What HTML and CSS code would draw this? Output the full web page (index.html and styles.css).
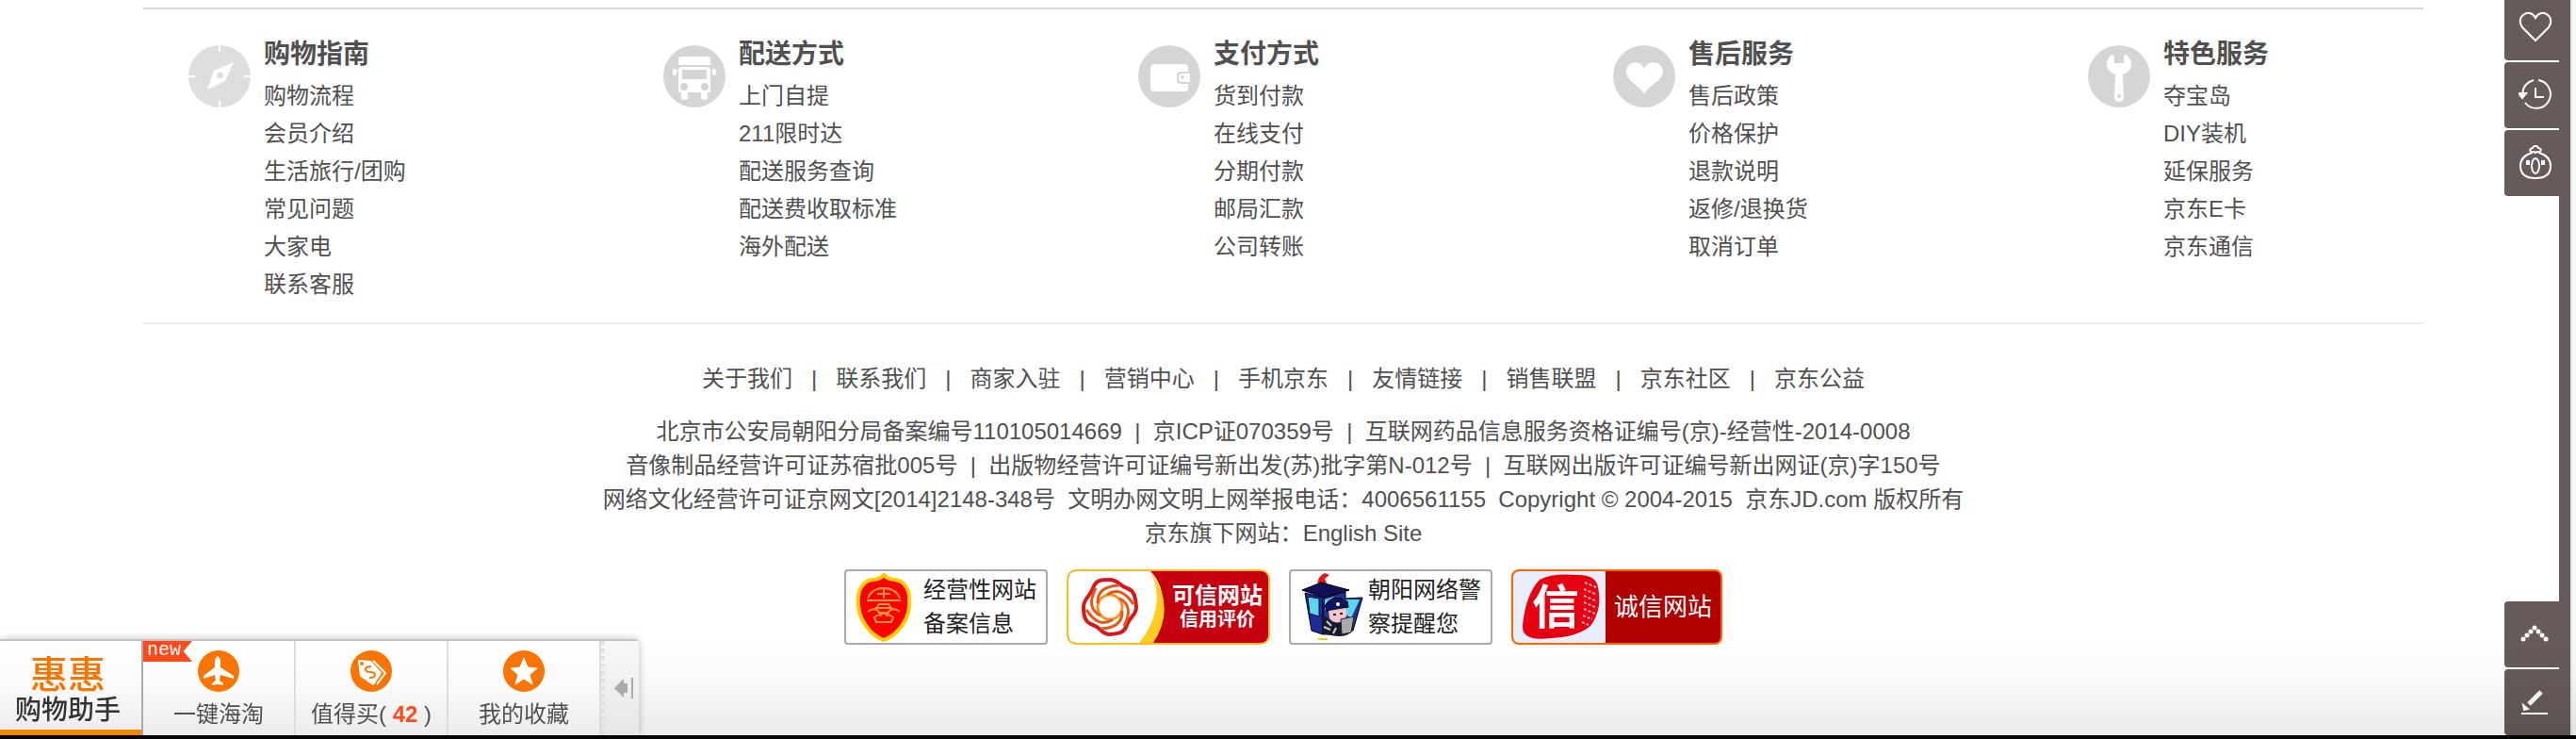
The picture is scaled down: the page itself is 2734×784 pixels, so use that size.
FILE: index.html
```html
<!DOCTYPE html>
<html lang="zh-CN">
<head>
<meta charset="utf-8">
<title>京东</title>
<link rel="stylesheet" href="styles.css">
</head>
<body>
<footer class="footer">
  <div class="services">
    <section class="service">
      <svg class="service-icon" viewBox="0 0 66 66" aria-hidden="true"><circle cx="33" cy="33" r="33" fill="#dedede"/><path d="M33 0v7M33 59v7M0 33h7M59 33h7" stroke="#fff" stroke-width="2"/><path d="M48 18L39 38 20 47 27 27z" fill="#fff"/><circle cx="33.500" cy="32" r="3.500" fill="#dedede"/></svg>
      <div>
        <h2 class="service-title">购物指南</h2>
        <ul class="service-list"><li><a href="#">购物流程</a></li><li><a href="#">会员介绍</a></li><li><a href="#">生活旅行/团购</a></li><li><a href="#">常见问题</a></li><li><a href="#">大家电</a></li><li><a href="#">联系客服</a></li></ul>
      </div>
    </section>
    <section class="service">
      <svg class="service-icon" viewBox="0 0 66 66" aria-hidden="true"><circle cx="33" cy="33" r="33" fill="#d5d5d5"/><g fill="#fff"><path d="M19 12h28q3 0 3 3v6H16v-6q0-3 3-3z"/><path d="M20 23h26q4 0 4 4v23H16V27q0-4 4-4z"/><rect x="10" y="25" width="4" height="7" rx="2"/><rect x="52" y="25" width="4" height="7" rx="2"/><rect x="19" y="48" width="7" height="10" rx="3"/><rect x="40" y="48" width="7" height="10" rx="3"/></g><path d="M13 27h3M50 27h3" stroke="#fff" stroke-width="1"/><rect x="20" y="26" width="26" height="10" fill="#d5d5d5"/><circle cx="22" cy="44" r="4" fill="#d5d5d5"/><circle cx="44" cy="44" r="4" fill="#d5d5d5"/></svg>
      <div>
        <h2 class="service-title">配送方式</h2>
        <ul class="service-list"><li><a href="#">上门自提</a></li><li><a href="#">211限时达</a></li><li><a href="#">配送服务查询</a></li><li><a href="#">配送费收取标准</a></li><li><a href="#">海外配送</a></li></ul>
      </div>
    </section>
    <section class="service">
      <svg class="service-icon" viewBox="0 0 66 66" aria-hidden="true"><circle cx="33" cy="33" r="33" fill="#d5d5d5"/><rect x="13" y="20" width="40" height="29" rx="4" fill="#fff"/><path d="M55 28h-9q-5 0-5 4v5q0 4 5 4h9z" fill="#d5d5d5"/><path d="M55 30h-8q-4 0-4 3v3q0 3 4 3h8z" fill="#fff"/><circle cx="47" cy="34" r="2" fill="#d5d5d5"/></svg>
      <div>
        <h2 class="service-title">支付方式</h2>
        <ul class="service-list"><li><a href="#">货到付款</a></li><li><a href="#">在线支付</a></li><li><a href="#">分期付款</a></li><li><a href="#">邮局汇款</a></li><li><a href="#">公司转账</a></li></ul>
      </div>
    </section>
    <section class="service">
      <svg class="service-icon" viewBox="0 0 66 66" aria-hidden="true"><circle cx="33" cy="33" r="33" fill="#d5d5d5"/><path d="M33 25C35 16 52 15 53 28 53 38 38 42 33 52 28 42 14 38 14 28 15 15 31 16 33 25z" fill="#fff"/></svg>
      <div>
        <h2 class="service-title">售后服务</h2>
        <ul class="service-list"><li><a href="#">售后政策</a></li><li><a href="#">价格保护</a></li><li><a href="#">退款说明</a></li><li><a href="#">返修/退换货</a></li><li><a href="#">取消订单</a></li></ul>
      </div>
    </section>
    <section class="service">
      <svg class="service-icon" viewBox="0 0 66 66" aria-hidden="true"><circle cx="33" cy="33" r="33" fill="#d5d5d5"/><path d="M25 10q3 0 3 3v6h10v-6q0-3 3-3 5 4 5 11 0 7-9 10l1 24q0 5-5 5t-5-5l1-24q-9-3-9-10 0-7 5-11z" fill="#fff"/><circle cx="33" cy="54" r="2" fill="#d5d5d5"/></svg>
      <div>
        <h2 class="service-title">特色服务</h2>
        <ul class="service-list"><li><a href="#">夺宝岛</a></li><li><a href="#">DIY装机</a></li><li><a href="#">延保服务</a></li><li><a href="#">京东E卡</a></li><li><a href="#">京东通信</a></li></ul>
      </div>
    </section>
  </div>

  <nav class="about">
    <a href="#">关于我们</a><span>|</span><a href="#">联系我们</a><span>|</span><a href="#">商家入驻</a><span>|</span><a href="#">营销中心</a><span>|</span><a href="#">手机京东</a><span>|</span><a href="#">友情链接</a><span>|</span><a href="#">销售联盟</a><span>|</span><a href="#">京东社区</a><span>|</span><a href="#">京东公益</a>
  </nav>

  <div class="legal">
    <p>北京市公安局朝阳分局备案编号110105014669&nbsp; |&nbsp; 京ICP证070359号&nbsp; |&nbsp; <a href="#">互联网药品信息服务资格证编号(京)-经营性-2014-0008</a></p>
    <p><a href="#">音像制品经营许可证苏宿批005号</a>&nbsp; |&nbsp; 出版物经营许可证编号新出发(苏)批字第N-012号&nbsp; |&nbsp; 互联网出版许可证编号新出网证(京)字150号</p>
    <p><a href="#">网络文化经营许可证京网文[2014]2148-348号</a>&nbsp; 文明办网文明上网举报电话：4006561155&nbsp; Copyright © 2004-2015&nbsp; 京东JD.com 版权所有</p>
    <p>京东旗下网站：<a href="#">English Site</a></p>
  </div>

  <div class="badges">
    <a class="badge badge-plain" href="#">
      <svg class="badge-shield" viewBox="0 0 60 74" aria-hidden="true"><path d="M30 3q5 5 12 5 8 1 12 8 4 6 3 20-1 15-13 27-6 6-14 9-8-3-14-9Q4 50 3 36 2 21 6 16q4-7 12-8 7 0 12-5z" fill="#f00" stroke="#fc0" stroke-width="4"/><path d="M13 28Q17 17 30 17t17 11M12 30h36M30 16v12M24 17h12M23 23h14M25 34h10l3 4H22zM13 42q6-5 11-1l3 6M47 42q-6-5-11-1l-3 6M20 48q10-8 20 0l-2 5H22zM24 43h12" fill="none" stroke="#f93" stroke-width="2"/></svg>
      <span>经营性网站<br>备案信息</span>
    </a>
    <a class="badge badge-trust" href="#">
      <svg class="badge-swoosh" viewBox="0 0 104 76" aria-hidden="true"><path d="M0 0h87q14 14 14 40 0 20-12 36H0z" fill="#fff"/><path d="M87 0q28 38 3 76H75q30-38 12-76z" fill="#fc2"/><g transform="translate(44 38)"><path d="M0-29C9-29 9-23 18-20S27-9 28 0c0 9-7 10-10 19S9 28 0 29c-9 0-9-7-18-10S-28 9-28 0c0-9 7-11 10-20S-9-29 0-29z" fill="#fff" stroke="#d8161c" stroke-width="4"/><circle r="13" fill="none" stroke="#f7941d" stroke-width="3"/><g fill="none" stroke="#e4571b" stroke-width="3"><path d="M-13-4Q-14-22 10-23"/><path d="M-13-4Q-14-22 10-23" transform="rotate(60)"/><path d="M-13-4Q-14-22 10-23" transform="rotate(120)"/><path d="M-13-4Q-14-22 10-23" transform="rotate(180)"/><path d="M-13-4Q-14-22 10-23" transform="rotate(240)"/><path d="M-13-4Q-14-22 10-23" transform="rotate(300)"/></g></g></svg>
      <span class="trust-text"><b>可信网站</b><small>信用评价</small></span>
    </a>
    <a class="badge badge-plain badge-police" href="#">
      <svg class="badge-cop" viewBox="0 0 70 74" aria-hidden="true"><path d="M19 14q-2-9 7-13l5 2-5 4 3 7z" fill="#e11"/><path d="M2 19L22 11 52 19 25 27z" fill="#115" stroke="#000"/><path d="M5 22L24 27V66L12 62z" fill="#1d2a9c" stroke="#000"/><path d="M8 26L20 28V47L10 44z" fill="#5cd6ee" stroke="#013"/><path d="M25 27L48 21V28L66 27 56 62 24 66z" fill="#24309a" stroke="#000"/><path d="M46 29l17 0-9 20-8-6zM26 29l10-3-6 12-4 2z" fill="#5cd6ee"/><path d="M26 36q8-15 24-5l1 6-22 5z" fill="#0a1760" stroke="#000"/><path d="M30 41l18-3q4 9-3 14-9 4-14-3z" fill="#f6c5cb"/><path d="M22 45l8 4q6 8 18 3l8 8q-4 9-16 8l-16-2z" fill="#171c2b"/><path d="M43 50l14-3-3 17-10 2z" fill="#aaa" stroke="#222"/><path d="M28 52l5 5M25 58l7 3M35 65l3-6" stroke="#ccc" stroke-width="2"/><circle cx="40" cy="34" r="2" fill="#fff"/><path d="M35 45h3M42 44h3" stroke="#222" stroke-width="2"/><path d="M19 71h10" stroke="#fc0" stroke-width="2"/></svg>
      <span>朝阳网络警<br>察提醒您</span>
    </a>
    <a class="badge badge-honest" href="#">
      <svg class="badge-seal" viewBox="0 0 98 76" aria-hidden="true"><path d="M0 0h98v76H0z" fill="#e8eefa"/><path d="M28 9Q42 2 66 4q22-1 24 13 5 24-8 41Q68 70 40 71 9 75 10 58 13 25 28 9z" fill="#e60012"/><path d="M76 12l12 5M75 19l14 6M75 26l14 6M75 33l14 6M75 40l12 5M74 47l10 4M73 54l7 3" stroke="#f6b9c0" stroke-width="2" stroke-dasharray="3 2"/><text x="20" y="56" class="seal-char">信</text></svg>
      <span class="honest-text">诚信网站</span>
    </a>
  </div>
</footer>

<aside class="sidebar">
  <div class="tabs tabs-top">
    <button class="tab" type="button" aria-label="我的关注"><svg class="tab-icon" viewBox="0 0 36 36"><path d="M18 33L4 19Q0 13 3 8 7 3 12 4q4 1 6 5 2-4 6-5 5-1 9 4 3 5-1 11z"/></svg></button>
    <button class="tab" type="button" aria-label="我的足迹"><svg class="tab-icon" viewBox="0 0 36 36"><path d="M16 3Q5 6 4 18M21 3a15 15 0 1 1-14 24M18 11v10h9"/><path d="M0 17h8l-4 5z" fill="#fff"/></svg></button>
    <button class="tab" type="button" aria-label="我的钱包"><svg class="tab-icon" viewBox="0 0 36 36"><path d="M14 8Q2 12 2 22q0 13 16 13t16-13Q34 12 22 8M14 8q-4-4 1-5 3-5 6 0 5 1 1 5-2-2-4 0-2-2-4 0z"/><ellipse cx="18" cy="22" rx="4" ry="8"/><path d="M10 16v5M26 16v5" stroke-width="4"/></svg></button>
  </div>
  <div class="tabs">
    <button class="tab" type="button" aria-label="返回顶部"><svg class="tab-icon" viewBox="0 0 36 36"><g fill="#fff" stroke="none"><circle cx="5" cy="24" r="2.500"/><circle cx="9" cy="20" r="2.500"/><circle cx="13" cy="16" r="2.500"/><circle cx="17" cy="12" r="2.500"/><circle cx="21" cy="16" r="2.500"/><circle cx="25" cy="20" r="2.500"/><circle cx="29" cy="24" r="2.500"/></g></svg></button>
    <button class="tab" type="button" aria-label="意见反馈"><svg class="tab-icon" viewBox="0 0 36 36"><path d="M3 31h28"/><path d="M24 8L11 21" stroke-width="5"/><path d="M5 22l5 4-4 1z" fill="#fff"/></svg></button>
  </div>
</aside>

<div class="shade"></div>

<div class="helper">
  <a class="helper-brand" href="#"><span class="brand-mark">惠惠</span><span class="brand-name">购物助手</span></a>
  <a class="helper-item" href="#">
    <span class="new-flag">new</span>
    <svg class="helper-icon" viewBox="0 0 44 44" aria-hidden="true"><circle cx="22" cy="22" r="22" fill="#f97400"/><path d="M21 6q3 2 3 6v6l14 9v3l-14-4-1 6 4 3v2l-6-1-6 1v-2l4-3-1-6-12 4v-3l12-9v-6q0-4 3-6z" fill="#fff"/></svg>
    <span>一键海淘</span>
  </a>
  <a class="helper-item" href="#">
    <svg class="helper-icon" viewBox="0 0 44 44" aria-hidden="true"><circle cx="22" cy="22" r="22" fill="#f97400"/><path d="M9 11l12 1 11 12-8 12-13-9z" fill="#fff" stroke="#fff" stroke-width="2" stroke-linejoin="round"/><path d="M24 11l13 13-9 12" fill="none" stroke="#fff" stroke-width="2"/><circle cx="12" cy="14" r="2" fill="#f97400"/><path d="M22 17q-6 0-6 3t5 3 5 3-6 3" fill="none" stroke="#f97400" stroke-width="2"/></svg>
    <span>值得买( <b class="count">42</b> )</span>
  </a>
  <a class="helper-item" href="#">
    <svg class="helper-icon" viewBox="0 0 44 44" aria-hidden="true"><circle cx="22" cy="22" r="22" fill="#f97400"/><path d="M22 8l4 10 10 1-8 7 3 10-9-6-9 6 3-10-8-7 10-1z" fill="#fff" stroke="#fff" stroke-linejoin="round"/></svg>
    <span>我的收藏</span>
  </a>
  <button class="helper-fold" type="button" aria-label="收起"><svg class="fold-icon" viewBox="0 0 20 22"><path d="M0 11L10 1v5h4v10h-4v5z" fill="#aaa"/><path d="M19 0v22" stroke="#aaa" stroke-width="2"/></svg></button>
</div>
<div class="baseline"></div>
</body>
</html>
```
FILE: styles.css
```css
* { box-sizing: border-box; }

body {
  margin: 0;
  min-height: 100vh;
  padding: 8px 10px 0 0;
  background: #fff;
  color: #505050;
  font-family: "Liberation Sans", "Noto Sans CJK SC", sans-serif;
  font-size: 24px;
  line-height: 36px;
}

a { color: inherit; text-decoration: none; }
p { margin: 0; }
button { border: 0; padding: 0; cursor: pointer; }

.footer {
  max-width: 2420px;
  margin: 0 auto;
  text-align: center;
}

.services {
  display: grid;
  grid-template-columns: repeat(4, 1fr) 356px;
  padding: 28px 0 20px 48px;
  border-top: 2px solid #d4d4d4;
  border-bottom: 2px solid #ededed;
  text-align: left;
}

.service { display: flex; gap: 14px; }
.service-icon { flex: none; width: 66px; height: 66px; margin-top: 10px; }
.service-title { margin: 0 0 4px; font-size: 28px; line-height: 40px; font-weight: 700; }
.service-list { margin: 0; padding: 0; list-style: none; line-height: 40px; }
.service-list li { height: 40px; }

.about {
  display: flex;
  justify-content: center;
  gap: 20px;
  margin: 40px 0 20px;
}

.badges {
  display: flex;
  justify-content: center;
  gap: 20px;
  margin-top: 20px;
}

.badge {
  display: flex;
  align-items: center;
  width: 216px;
  height: 80px;
  overflow: hidden;
  border: 2px solid #aaa;
  border-radius: 4px;
  color: #222;
  white-space: nowrap;
  text-align: left;
}

.badge-plain { gap: 12px; padding-left: 10px; }
.badge-police { gap: 2px; }
.badge-shield { flex: none; width: 60px; height: 74px; }
.badge-cop { flex: none; width: 70px; height: 74px; }

.badge-trust {
  border-color: #fb2;
  border-radius: 10px;
  background: #c7000f;
  color: #fff;
}
.badge-swoosh { flex: none; width: 104px; height: 76px; }
.trust-text { display: flex; flex: 1; flex-direction: column; align-items: center; line-height: 26px; }
.trust-text small { font-size: 20px; font-weight: 700; line-height: 24px; }

.badge-honest {
  width: 224px;
  border-color: #f60;
  border-radius: 8px;
  background: #b00000;
  color: #fff;
}
.badge-seal { flex: none; width: 98px; height: 76px; }
.seal-char { fill: #fff; font-size: 50px; font-weight: 700; }
.honest-text { flex: 1; text-align: center; font-size: 26px; }

.sidebar {
  position: fixed;
  top: 0;
  right: 4px;
  bottom: 4px;
  display: flex;
  flex-direction: column;
  justify-content: space-between;
  width: 72px;
  background: linear-gradient(to left, #e8e8e8 2px, #665a5a 2px, #665a5a 14px, transparent 14px);
}
.sidebar::after {
  content: "";
  position: absolute;
  top: 0;
  right: -4px;
  bottom: 0;
  width: 4px;
  background: #f7f7f7;
}
.tabs { display: flex; flex-direction: column; gap: 2px; width: 58px; }
.tabs-top { margin-top: -6px; }
.tab {
  display: flex;
  align-items: center;
  height: 70px;
  padding: 0 0 2px 15px;
  border-radius: 4px 0 0 4px;
  background: #665a5a;
}
.tab-icon { width: 36px; height: 36px; fill: none; stroke: #fff; stroke-width: 2; }

.shade {
  position: fixed;
  right: 0;
  bottom: 4px;
  left: 0;
  height: 100px;
  background: linear-gradient(transparent, rgba(0, 0, 0, .02) 40%, rgba(0, 0, 0, .08));
  pointer-events: none;
}

.helper {
  position: fixed;
  bottom: 4px;
  left: 0;
  display: flex;
  height: 102px;
  border-top: 2px solid #c4c4c4;
  border-radius: 0 4px 0 0;
  background: linear-gradient(#fff, #fafafa 50%, #ebebeb);
  box-shadow: 0 0 8px rgba(0, 0, 0, .25);
}

.helper-brand {
  display: flex;
  flex-direction: column;
  align-items: center;
  width: 152px;
  padding: 16px 6px 0 0;
  border-right: 2px solid #aaa;
  background: linear-gradient(to top, #ee8b00 6px, transparent 6px);
  color: #333;
}
.brand-mark { color: #f97400; font-size: 40px; line-height: 40px; font-weight: 500; }
.brand-name { font-size: 28px; line-height: 36px; font-weight: 500; }

.helper-item {
  position: relative;
  display: flex;
  flex-direction: column;
  align-items: center;
  gap: 6px;
  width: 162px;
  padding-top: 10px;
  border-right: 2px solid #ddd;
}
.helper-icon { width: 44px; height: 44px; }
.count { color: #ff4a1c; }

.new-flag {
  position: absolute;
  top: 0;
  left: 0;
  width: 52px;
  height: 22px;
  padding-left: 4px;
  background: #ff4a1c;
  clip-path: polygon(0 0, 100% 0, 82% 50%, 100% 100%, 0 100%);
  color: #fff;
  font-family: "Liberation Mono", monospace;
  font-size: 20px;
  line-height: 20px;
}

.helper-fold {
  display: flex;
  align-items: center;
  justify-content: flex-end;
  width: 40px;
  padding-right: 6px;
  border-left: 4px dotted #ddd;
  background: linear-gradient(#f8f8f8, #e6e6e6);
}
.fold-icon { width: 20px; height: 22px; }

.baseline {
  position: fixed;
  right: 0;
  bottom: 0;
  left: 0;
  height: 4px;
  background: #050505;
}
```
